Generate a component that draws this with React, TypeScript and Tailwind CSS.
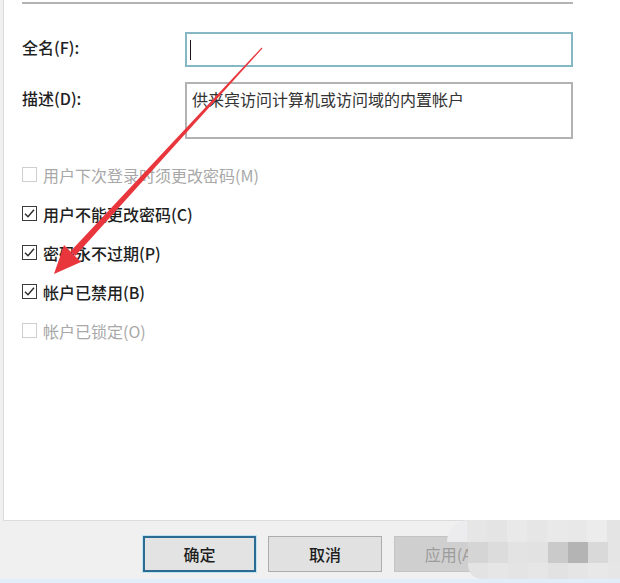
import React from "react";

const font = "font-['Noto_Sans_CJK_SC','Noto_Sans',sans-serif]";

type Opt = { label: string; checked: boolean; disabled?: boolean };

const options: Opt[] = [
  { label: "用户下次登录时须更改密码(M)", checked: false, disabled: true },
  { label: "用户不能更改密码(C)", checked: true },
  { label: "密码永不过期(P)", checked: true },
  { label: "帐户已禁用(B)", checked: true },
  { label: "帐户已锁定(O)", checked: false, disabled: true },
];

function CheckRow({ label, checked, disabled }: Opt) {
  return (
    <div className="h-[39px] flex items-center gap-[6px]">
      <span
        className={
          disabled
            ? "w-[15px] h-[15px] border border-[#cfcfcf] bg-white"
            : "w-[15px] h-[15px] border border-[#3a3a3a] bg-white flex items-center justify-center"
        }
      >
        {checked && (
          <svg width="13" height="13" viewBox="0 0 13 13">
            <path d="M2 6.8 L5 9.8 L11 2.8" fill="none" stroke="#2a2a2a" strokeWidth="1.4" />
          </svg>
        )}
      </span>
      <span className={disabled ? "text-[16px] text-[#a8a8a8]" : "text-[16px] text-[#1f1f1f] font-medium"}>{label}</span>
    </div>
  );
}

// mosaic watermark over the bottom right corner
const mosaicTop = ["#ececef", "#e6e6e6", "#e4e4e4", "#e9e9e9", "#e6e6e6", "#e9e9e9", "#e8e8e8", "#ececec", "#e4e4e4"];
const mosaicMid = ["#d5d5d5", "#dcdcdc", "#e3e3e3", "#e2e2e2", "#cacaca", "#b4b4b4", "#d9d9d9", "#e5e5e5"];
const mosaicLow = ["#e3e3e3", "#e6e6e6", "#e4e4e4", "#e6e6e6", "#e2e2e2", "#e5e5e5", "#e8e8e8", "#e6e6e6"];

function Mosaic() {
  return (
    <div className="absolute left-[447px] top-[520px] w-[173px] h-[59px] flex flex-col pointer-events-none">
      <div className="h-[22px] flex rounded-tl-[22px] overflow-hidden">
        {mosaicTop.map((c, i) => (
          <div key={i} className="w-[20px] shrink-0 h-full" style={{ background: c }} />
        ))}
      </div>
      <div className="h-[21px] flex pl-[21px]">
        {mosaicMid.map((c, i) => (
          <div key={i} className="w-[20px] shrink-0 h-full" style={{ background: c }} />
        ))}
      </div>
      <div className="h-[16px] flex pl-[21px]">
        <div className="flex rounded-bl-[14px] overflow-hidden">
          {mosaicLow.map((c, i) => (
            <div key={i} className="w-[20px] shrink-0 h-[16px]" style={{ background: c }} />
          ))}
        </div>
      </div>
    </div>
  );
}

function Arrow() {
  return (
    <svg className="absolute left-0 top-0 pointer-events-none" width="620" height="583" viewBox="0 0 620 583">
      <polygon points="262.4,48.4 261.6,47.6 70.6,251.2 75.4,255.8" fill="#e8363c" />
      <polygon points="54,274 81,262 64,245" fill="#e8363c" />
    </svg>
  );
}

export default function App() {
  return (
    <div className={`relative w-[620px] h-[583px] bg-[#f0f0f0] flex flex-col overflow-hidden ${font}`}>
      <div className="ml-[3px] h-[521px] shrink-0 bg-white border-b border-l border-[#dcdcdc] pl-[18px] pr-[47px] pt-[2px]">
        <div className="h-[2px] bg-[#b4b4b4]" />
        <div className="mt-[28px] flex items-start">
          <div className="w-[163px] text-[16px] text-[#1f1f1f] font-medium pt-[3px]">全名(F):</div>
          <div className="w-[388px] h-[35px] border-2 border-[#86b7c4] px-[3px] flex items-center">
            <div className="w-[1px] h-[20px] bg-[#1a1a1a]" />
          </div>
        </div>
        <div className="mt-[15px] flex items-start">
          <div className="w-[163px] text-[16px] text-[#1f1f1f] font-medium pt-[4px]">描述(D):</div>
          <div className="w-[388px] h-[57px] border-2 border-[#b2b2b2] px-[5px] pt-[3px] text-[16px] text-[#333333]">
            供来宾访问计算机或访问域的内置帐户
          </div>
        </div>
        <div className="mt-[16px] flex flex-col">
          {options.map((o) => (
            <CheckRow key={o.label} {...o} />
          ))}
        </div>
      </div>
      <div className="flex-1 flex items-start gap-[12px] pl-[143px] pt-[15px]">
        <button className="w-[113px] h-[36px] border-2 border-[#2c6b92] bg-[#e3e3e3] text-[16px] text-[#1e1e1e] font-medium outline outline-1 outline-[#bfe3f0]">
          确定
        </button>
        <button className="w-[114px] h-[36px] border border-[#adadad] bg-[#e1e1e1] text-[16px] text-[#1e1e1e] font-medium">
          取消
        </button>
        <button className="w-[114px] h-[36px] border border-[#c4c4c4] bg-[#cfcfcf] text-[16px] text-[#9c9c9c]">
          应用(A)
        </button>
      </div>
      <div className="h-[4px] bg-[#e1eef9]" />
      <Mosaic />
      <Arrow />
    </div>
  );
}
